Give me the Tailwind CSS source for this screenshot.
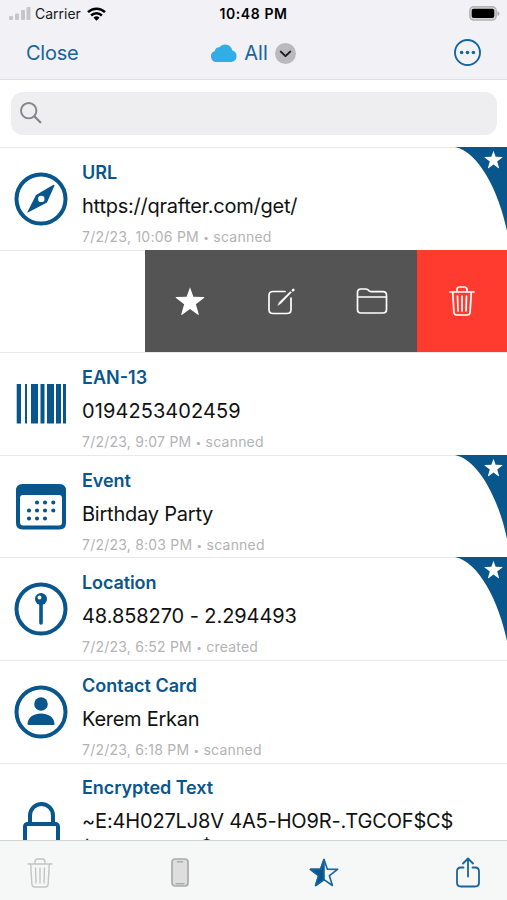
<!DOCTYPE html>
<html lang="en">
<head>
<meta charset="utf-8">
<title>History</title>
<script src="https://cdn.jsdelivr.net/npm/@tailwindcss/browser@4"></script>
</head>
<body class="font-['Inter',sans-serif]">
<svg class="hidden">
  <symbol id="star" viewBox="0 0 24 24"><path d="M12 .9l2.7 7.7 8.2.2c.5 0 .7.5.3.8l-6.5 5 2.3 7.9c.1.5-.3.8-.7.5L12 18.4 5.700 23c-.4.300-.8 0-.7-.5l2.300-7.900-6.500-5c-.4-.3-.2-.8.3-.8l8.200-.2z" stroke-linejoin="round"/></symbol>
  <symbol id="trash" viewBox="0 0 26 30"><g fill="none" stroke="currentColor" stroke-linecap="round" stroke-linejoin="round"><path d="M1 6h24M3.700 6l1.200 20.200q.2 2.800 3 2.800h10.200q2.800 0 3-2.800L22.300 6M8 6V3.700Q8 1 10.700 1h4.600Q18 1 18 3.700V6M13 10v15M8.500 10l.5 15M17.500 10l-.5 15"/></g></symbol>
  <symbol id="corner" viewBox="0 0 52 84"><path d="M0 0h52v84C44 45 24 5 0 0z"/></symbol>
</svg>
<div class="flex h-[900px] w-[507px] flex-col overflow-hidden bg-white">
  <header class="h-20 shrink-0 border-b border-[#dfdfe3] bg-[#f1f1f6]">
    <div class="grid h-7 grid-cols-3 items-center pl-[9px] pr-[7px]">
      <div class="flex items-center">
        <svg width="22" height="14" viewBox="0 0 22 14" fill="#c6c6ca"><rect y="9" width="4" height="4" rx="1"/><rect x="6" y="6.500" width="4" height="6.500" rx="1"/><rect x="12" y="3" width="4" height="10" rx="1"/><rect x="17.500" y="0" width="4" height="13" rx="1"/></svg>
        <span class="ml-1 text-[14px] leading-7 text-[#18181a]">Carrier</span>
        <svg class="ml-[6px]" width="19" height="14" viewBox="0 0 19 14" fill="none" stroke="#000" stroke-width="2.500"><path d="M1 5.200a12.200 12.200 0 0 1 17 0M4.100 8.500a7.700 7.700 0 0 1 10.800 0"/><path d="M9.500 13.800l-3-3.100a4.300 4.300 0 0 1 6 0z" fill="#000" stroke="none"/></svg>
      </div>
      <span class="whitespace-nowrap pr-[2px] text-center text-[14px] font-semibold leading-7 tracking-[0.600px]">10:48 PM</span>
      <svg class="-mt-[2px] justify-self-end" width="31" height="15" viewBox="0 0 31 15"><rect x=".8" y=".8" width="26.400" height="13.200" rx="3.800" fill="#d4d4d6" stroke="#b4b4b6" stroke-width="1.400"/><rect x="2.700" y="2.700" width="22.600" height="9.400" rx="2" fill="#000"/><path d="M28.500 5v5q2-1 2-2.500t-2-2.500" fill="#aaa"/></svg>
    </div>
    <div class="flex h-[50px] items-center justify-between pl-[26px] pr-[26px] text-[20px] text-[#17659c]">
      <span class="w-[82px] tracking-[-0.250px]">Close</span>
      <div class="flex items-center">
        <svg width="26" height="18" viewBox="0 0 26 18" fill="#32ade6"><path d="M6 18a5.600 5.600 0 0 1-2.200-10.900A4.700 4.700 0 0 1 8.300 3.200 7.400 7.400 0 0 1 21.300 6.500 5.900 5.900 0 0 1 20.500 18z"/></svg>
        <span class="ml-[7px]">All</span>
        <svg class="ml-[7px]" width="21" height="21" viewBox="0 0 21 21"><circle cx="10.500" cy="10.500" r="10.500" fill="#b9b9be"/><path d="M5.800 8.600l4.700 4.500 4.700-4.500" fill="none" stroke="#1c1c1e" stroke-width="2" stroke-linecap="round" stroke-linejoin="round"/></svg>
      </div>
      <div class="-mt-[2px] flex w-[82px] justify-end"><svg width="27" height="27" viewBox="0 0 27 27" fill="#17659c"><circle cx="13.500" cy="13.500" r="12.500" fill="none" stroke="#17659c" stroke-width="1.900"/><circle cx="7.600" cy="13.500" r="1.800"/><circle cx="13.500" cy="13.500" r="1.800"/><circle cx="19.400" cy="13.500" r="1.800"/></svg></div>
    </div>
  </header>
  <div class="h-[67px] shrink-0 pl-[11px] pr-[10px] pt-[11.500px]">
    <div class="flex h-[43.500px] items-center rounded-[12px] bg-[#eeeef0] pl-[9px]">
      <svg width="22" height="22" viewBox="0 0 22 22" fill="none" stroke="#858589" stroke-width="1.900"><circle cx="8.700" cy="8.700" r="7.700"/><path d="M14.300 14.300l6 6" stroke-width="2.300" stroke-linecap="round"/></svg>
    </div>
  </div>
  <main class="min-h-0 flex-1 overflow-hidden text-[#08568c]">
    <article class="relative flex h-[102.600px] border-t border-[#e9e9eb] pl-[14px]">
      <svg class="mt-[24px] shrink-0" width="54" height="54" viewBox="0 0 54 54"><circle cx="27" cy="27" r="24.500" fill="none" stroke="currentColor" stroke-width="4"/><path fill="currentColor" fill-rule="evenodd" d="M40.500 13.500L33 30.500 14 40.500Q13 41 13.700 39.500L22 23 39 13Q41 12.500 40.500 13.500zM27.300 23.700a3.200 3.200 0 1 0 0 6.400 3.200 3.200 0 0 0 0-6.400z"/></svg>
      <div class="ml-[14px] whitespace-nowrap pt-[12.500px]">
        <h2 class="text-[18px] font-semibold leading-6">URL</h2>
        <p class="mt-[8px] text-[20px] leading-[26px] tracking-[-0.240px] text-[#111]">https://qrafter.com/get/</p>
        <p class="mt-[9px] text-[14px] leading-[18px] tracking-[0.250px] text-[#b3b3b5]">7/2/23, 10:06 PM <span class="align-[1px] text-[10px]">•</span> scanned</p>
      </div>
      <svg class="absolute right-0 -top-px" width="52" height="84" fill="#08568c"><use href="#corner"/></svg>
      <svg class="absolute right-[4px] top-[2px]" width="19" height="19" fill="#fff"><use href="#star"/></svg>
    </article>
    <section class="flex h-[102.600px] justify-end border-t border-[#e9e9eb] text-white">
      <div class="-mt-px grid w-[272px] grid-cols-3 place-items-center bg-[#545454]">
        <svg width="30" height="30" fill="#fff"><use href="#star"/></svg>
        <svg width="28" height="28" viewBox="0 0 28 28" fill="none" stroke="currentColor" stroke-width="1.700" stroke-linecap="round" stroke-linejoin="round"><path d="M18 4.500H6Q2 4.500 2 8.500v14q0 4 4 4h14q4 0 4-4V11"/><path d="M11 18l1.200-2.600L23.300 4.600l1 1L13.500 16.800z" fill="currentColor" stroke-width=".5"/><path d="M25.900 3.300l.4-.4" stroke-width="2.600"/></svg>
        <svg width="32" height="28" viewBox="0 0 32 28" fill="none" stroke="currentColor" stroke-width="1.700" stroke-linejoin="round"><path d="M1.500 11V5.500Q1.500 2 5 2h4.500q1.500 0 2.600.9l1 .9q1 .8 2.500.8H27q3.500 0 3.500 3.500v14.400q0 3.500-3.500 3.500H5q-3.500 0-3.500-3.500zM1.500 10h29"/></svg>
      </div>
      <div class="-mt-px grid w-[90px] place-items-center bg-[#ff3b30]"><svg class="stroke-[1.700px]" width="26" height="30"><use href="#trash"/></svg></div>
    </section>
    <article class="flex h-[102.600px] border-t border-[#e9e9eb] pl-[14px]">
      <svg class="mt-[24px] shrink-0" width="54" height="54" viewBox="0 0 54 54" fill="currentColor"><path d="M2.700 7h4.300v39.500h-4.300zM11 7h2v39.500h-2zM17 7h7v39.500h-7zM26.500 7h4v39.500h-4zM33 7h7v39.500h-7zM42 7h5v39.500h-5zM49 7h3v39.500h-3z"/></svg>
      <div class="ml-[14px] whitespace-nowrap pt-[12.500px]">
        <h2 class="text-[18px] font-semibold leading-6">EAN-13</h2>
        <p class="mt-[8px] text-[20px] leading-[26px] tracking-[0.080px] text-[#111]">0194253402459</p>
        <p class="mt-[9px] text-[14px] leading-[18px] tracking-[0.220px] text-[#b3b3b5]">7/2/23, 9:07 PM <span class="align-[1px] text-[10px]">•</span> scanned</p>
      </div>
    </article>
    <article class="relative flex h-[102.600px] border-t border-[#e9e9eb] pl-[14px]">
      <svg class="mt-[24px] shrink-0" width="54" height="54" viewBox="0 0 54 54" fill="currentColor"><path fill-rule="evenodd" d="M8.500 4h37q6.500 0 6.500 6.500v32.500q0 6.500-6.500 6.500H8.500q-6.500 0-6.500-6.500V10.500Q2 4 8.500 4zM9 15q-3 0-3 3v24.500q0 3 3 3h36q3 0 3-3V18q0-3-3-3z"/><path d="M23 22.500v.01M31 22.500v.01M39.300 22.500v.01M15 30.500v.01M23 30.500v.01M31 30.500v.01M39.300 30.500v.01M15 38.500v.01M23 38.500v.01M31 38.500v.01" stroke="currentColor" stroke-width="4.200" stroke-linecap="round"/></svg>
      <div class="ml-[14px] whitespace-nowrap pt-[12.800px]">
        <h2 class="text-[18px] font-semibold leading-6 tracking-[-0.100px]">Event</h2>
        <p class="mt-[8px] text-[20px] leading-[26px] tracking-[-0.220px] text-[#111]">Birthday Party</p>
        <p class="mt-[9px] text-[14px] leading-[18px] tracking-[0.220px] text-[#b3b3b5]">7/2/23, 8:03 PM <span class="align-[1px] text-[10px]">•</span> scanned</p>
      </div>
      <svg class="absolute right-0 -top-px" width="52" height="84" fill="#08568c"><use href="#corner"/></svg>
      <svg class="absolute right-[4px] top-[2px]" width="19" height="19" fill="#fff"><use href="#star"/></svg>
    </article>
    <article class="relative flex h-[102.600px] border-t border-[#e9e9eb] pl-[14px]">
      <svg class="mt-[24px] shrink-0" width="54" height="54" viewBox="0 0 54 54"><circle cx="27" cy="27" r="24.500" fill="none" stroke="currentColor" stroke-width="4"/><path d="M27 18v23" stroke="currentColor" stroke-width="3.600" stroke-linecap="round"/><circle cx="27" cy="17" r="6" fill="currentColor"/><circle cx="25.500" cy="15.500" r="1.900" fill="#fff"/></svg>
      <div class="ml-[14px] whitespace-nowrap pt-[12.500px]">
        <h2 class="text-[18px] font-semibold leading-6 tracking-[-0.100px]">Location</h2>
        <p class="mt-[8px] text-[20px] leading-[26px] tracking-[-0.080px] text-[#111]">48.858270 - 2.294493</p>
        <p class="mt-[9px] text-[14px] leading-[18px] tracking-[0.220px] text-[#b3b3b5]">7/2/23, 6:52 PM <span class="align-[1px] text-[10px]">•</span> created</p>
      </div>
      <svg class="absolute right-0 -top-px" width="52" height="84" fill="#08568c"><use href="#corner"/></svg>
      <svg class="absolute right-[4px] top-[2px]" width="19" height="19" fill="#fff"><use href="#star"/></svg>
    </article>
    <article class="flex h-[102.600px] border-t border-[#e9e9eb] pl-[14px]">
      <svg class="mt-[24px] shrink-0" width="54" height="54" viewBox="0 0 54 54" fill="currentColor"><circle cx="27" cy="27" r="24.500" fill="none" stroke="currentColor" stroke-width="4"/><circle cx="27" cy="19" r="6.800"/><path d="M13.500 38.500C14 32 20 28.500 27 28.500S40 32 40.500 38.500q0 1.500-1.500 1.500H15q-1.500 0-1.500-1.500z"/></svg>
      <div class="ml-[14px] whitespace-nowrap pt-[12.800px]">
        <h2 class="text-[18px] font-semibold leading-6">Contact Card</h2>
        <p class="mt-[8px] text-[20px] leading-[26px] tracking-[-0.270px] text-[#111]">Kerem Erkan</p>
        <p class="mt-[9px] text-[14px] leading-[18px] tracking-[0.220px] text-[#b3b3b5]">7/2/23, 6:18 PM <span class="align-[1px] text-[10px]">•</span> scanned</p>
      </div>
    </article>
    <article class="flex h-[120px] border-t border-[#e9e9eb] pl-[14px]">
      <svg class="mt-[36px] shrink-0" width="54" height="54" viewBox="0 0 54 54" fill="none" stroke="currentColor" stroke-width="4"><rect x="11" y="24" width="33" height="32" rx="2.500"/><path d="M16 24V15.500a11.500 11.500 0 0 1 23 0V24"/></svg>
      <div class="ml-[14px] whitespace-nowrap pt-[12.500px]">
        <h2 class="text-[18px] font-semibold leading-6 tracking-[-0.060px]">Encrypted Text</h2>
        <p class="mt-[8px] text-[20px] leading-[26px] tracking-[-0.170px] text-[#111]">~E:4H027LJ8V 4A5-HO9R-.TGCOF$C$</p>
        <p class="text-[20px] leading-[26px] text-[#111]">(<span class="ml-[111px]">$</span></p>
      </div>
    </article>
  </main>
  <footer class="flex h-[60px] shrink-0 items-center justify-between border-t border-[#d4d4d5] bg-[#f6f7f7] pl-[27px] pr-[26px] pt-[4px] text-[#17659c]">
    <svg class="stroke-[1.400px] text-[#c3c4c5]" width="26" height="30"><use href="#trash"/></svg>
    <svg class="ml-[2px]" width="18" height="29" viewBox="0 0 18 29"><rect x="1" y="1" width="16" height="27" rx="3" fill="#dededf" stroke="#aaabac" stroke-width="1.700"/><path d="M6.500 3.800h5M5 25.800h8" stroke="#aaabac" stroke-width="1.500" stroke-linecap="round"/></svg>
    <svg class="ml-[3px]" width="30" height="30" viewBox="0 0 30 30" fill="none" stroke="currentColor" stroke-width="1.600" stroke-linejoin="round"><path d="M15 1.500l3.400 9.700 10.200.2-8.200 6.300 3 9.800L15 21.700l-8.400 5.800 3-9.800-8.200-6.300 10.200-.2z"/><path d="M15 1.500v20.200l-8.400 5.800 3-9.800-8.200-6.300 10.200-.2z" fill="#08568c"/></svg>
    <svg width="26" height="32" viewBox="0 0 26 32" fill="none" stroke="currentColor" stroke-width="1.800" stroke-linecap="round" stroke-linejoin="round"><path d="M8.500 10.500H6q-4 0-4 4v11q0 4 4 4h14q4 0 4-4v-11q0-4-4-4h-2.500M13 19.500V2M8 6.500l5-5 5 5"/></svg>
  </footer>
</div>
</body>
</html>
